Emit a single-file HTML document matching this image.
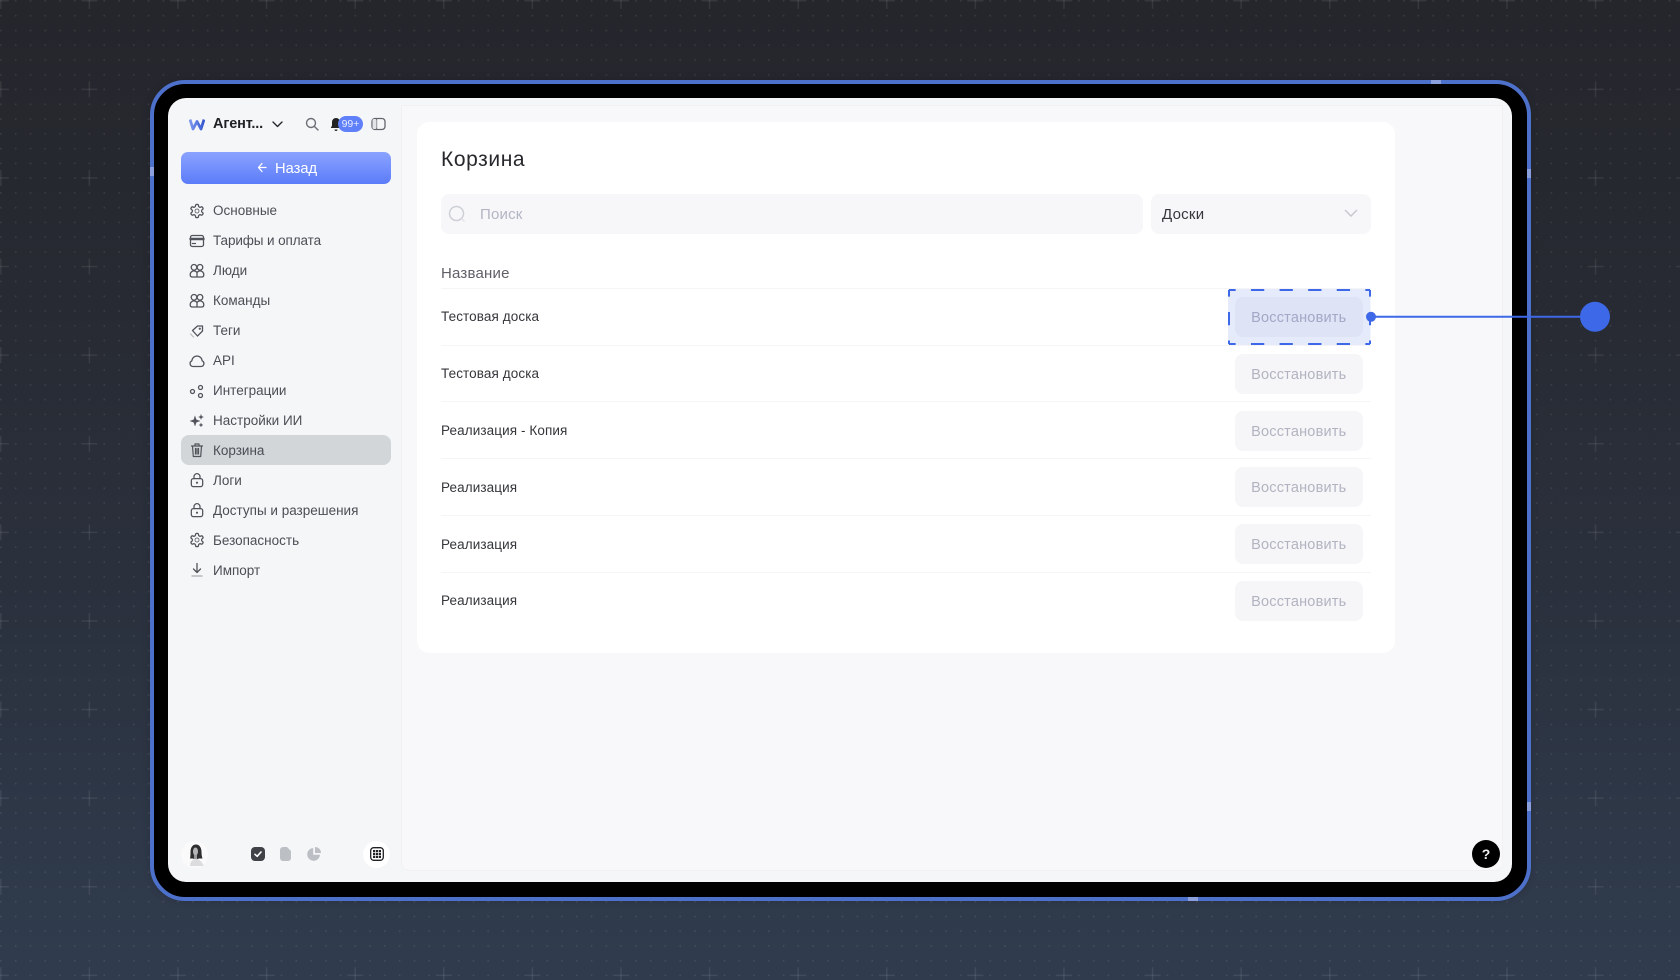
<!DOCTYPE html>
<html lang="ru"><head><meta charset="utf-8"><title>Корзина</title>
<style>
*{box-sizing:border-box}
html,body{margin:0;padding:0;width:1680px;height:980px;overflow:hidden}
body{position:relative;background:linear-gradient(180deg,#25262c 0%,#272a32 30%,#2b323f 65%,#303c4e 100%);font-family:"Liberation Sans",sans-serif;-webkit-font-smoothing:antialiased}
.a{position:absolute}
.t{position:absolute;white-space:nowrap;line-height:20px;height:20px}
.side{font-size:13.5px;color:#4c4e55;left:213px;letter-spacing:0}
.ic{position:absolute;left:189px;width:16px;height:16px;color:#50535a;fill:none;stroke:currentColor;stroke-width:1.9;stroke-linecap:round;stroke-linejoin:round}
.row{font-size:13.5px;color:#34363b;left:441px;letter-spacing:.1px}
.btn{position:absolute;left:1235px;width:127.5px;height:40px;border-radius:8px;background:#f6f6f9;color:#b1b3c0;font-size:14.5px;line-height:43.5px;text-align:center;letter-spacing:.2px;overflow:hidden}
.ln{position:absolute;left:441px;width:930px;height:1px;background:#f5f5f7}
</style></head><body>
<svg class="a" style="left:0;top:0" width="1680" height="980">
<defs>
<pattern id="p" x="0" y="0" width="88.6" height="88.6" patternUnits="userSpaceOnUse">
<g fill="#fff" fill-opacity=".09">
<rect x="14.9" y="14.9" width="1.6" height="1.6"/><rect x="29.7" y="14.9" width="1.6" height="1.6"/><rect x="44.4" y="14.9" width="1.6" height="1.6"/><rect x="59.2" y="14.9" width="1.6" height="1.6"/><rect x="74" y="14.9" width="1.6" height="1.6"/><rect x="0" y="14.9" width="1.6" height="1.6"/>
<rect x="14.9" y="29.7" width="1.6" height="1.6"/><rect x="29.7" y="29.7" width="1.6" height="1.6"/><rect x="44.4" y="29.7" width="1.6" height="1.6"/><rect x="59.2" y="29.7" width="1.6" height="1.6"/><rect x="74" y="29.7" width="1.6" height="1.6"/><rect x="0" y="29.7" width="1.6" height="1.6"/>
<rect x="14.9" y="44.4" width="1.6" height="1.6"/><rect x="29.7" y="44.4" width="1.6" height="1.6"/><rect x="44.4" y="44.4" width="1.6" height="1.6"/><rect x="59.2" y="44.4" width="1.6" height="1.6"/><rect x="74" y="44.4" width="1.6" height="1.6"/><rect x="0" y="44.4" width="1.6" height="1.6"/>
<rect x="14.9" y="59.2" width="1.6" height="1.6"/><rect x="29.7" y="59.2" width="1.6" height="1.6"/><rect x="44.4" y="59.2" width="1.6" height="1.6"/><rect x="59.2" y="59.2" width="1.6" height="1.6"/><rect x="74" y="59.2" width="1.6" height="1.6"/><rect x="0" y="59.2" width="1.6" height="1.6"/>
<rect x="14.9" y="74" width="1.6" height="1.6"/><rect x="29.7" y="74" width="1.6" height="1.6"/><rect x="44.4" y="74" width="1.6" height="1.6"/><rect x="59.2" y="74" width="1.6" height="1.6"/><rect x="74" y="74" width="1.6" height="1.6"/><rect x="0" y="74" width="1.6" height="1.6"/>
<rect x="14.9" y="0" width="1.6" height="1.6"/><rect x="29.7" y="0" width="1.6" height="1.6"/><rect x="44.4" y="0" width="1.6" height="1.6"/><rect x="59.2" y="0" width="1.6" height="1.6"/><rect x="74" y="0" width="1.6" height="1.6"/>
</g>
<g fill="#fff" fill-opacity=".08"><rect x="-7.2" y="0" width="16" height="1.5"/><rect x="81.4" y="0" width="16" height="1.5"/><rect x="0" y="-7.2" width="1.5" height="16"/><rect x="0" y="81.4" width="1.5" height="16"/></g>
</pattern>
<symbol id="gear" viewBox="0 0 24 24"><path d="M12.22 2h-.44a2 2 0 0 0-2 2v.18a2 2 0 0 1-1 1.73l-.43.25a2 2 0 0 1-2 0l-.15-.08a2 2 0 0 0-2.73.73l-.22.38a2 2 0 0 0 .73 2.73l.15.1a2 2 0 0 1 1 1.72v.51a2 2 0 0 1-1 1.74l-.15.09a2 2 0 0 0-.73 2.73l.22.38a2 2 0 0 0 2.73.73l.15-.08a2 2 0 0 1 2 0l.43.25a2 2 0 0 1 1 1.73V20a2 2 0 0 0 2 2h.44a2 2 0 0 0 2-2v-.18a2 2 0 0 1 1-1.73l.43-.25a2 2 0 0 1 2 0l.15.08a2 2 0 0 0 2.73-.73l.22-.39a2 2 0 0 0-.73-2.73l-.15-.08a2 2 0 0 1-1-1.74v-.5a2 2 0 0 1 1-1.74l.15-.09a2 2 0 0 0 .73-2.73l-.22-.38a2 2 0 0 0-2.73-.73l-.15.08a2 2 0 0 1-2 0l-.43-.25a2 2 0 0 1-1-1.73V4a2 2 0 0 0-2-2z"/><circle cx="12" cy="12" r="3" stroke-width="1.2"/></symbol>
<symbol id="users" viewBox="0 0 16 16"><circle cx="5" cy="4.300" r="2.800" stroke-width="1.300"/><circle cx="11" cy="4.300" r="2.800" stroke-width="1.300"/><path d="M8 9.500c-.8-1-1.800-1.600-3-1.600-2.200 0-3.800 1.700-3.800 3.800 0 1.500 1 2.300 2.300 2.300h9c1.300 0 2.300-.8 2.300-2.300 0-2.100-1.600-3.800-3.800-3.800-1.200 0-2.200.6-3 1.600zM8 9.500v4.500" stroke-width="1.300"/></symbol>
<symbol id="lock" viewBox="0 0 24 24"><rect x="3.500" y="10" width="17" height="12" rx="3"/><path d="M7.500 10V7a4.500 4.500 0 0 1 9 0v3"/><circle cx="12" cy="16" r=".7" fill="currentColor"/></symbol>
</defs>
<rect width="1680" height="980" fill="url(#p)"/>
</svg>

<!-- device frame -->
<div class="a" style="left:150px;top:80px;width:1380.500px;height:820.500px;border-radius:35px;background:#000;border:4.500px solid #4d70cb;box-shadow:0 0 8px rgba(0,0,0,.15)"></div>
<div class="a" style="left:1431px;top:80px;width:10px;height:4px;background:#8a9fdc"></div>
<div class="a" style="left:150px;top:167px;width:4px;height:9px;background:#8a9fdc"></div>
<div class="a" style="left:1526.500px;top:169px;width:4px;height:9px;background:#8a9fdc"></div>
<div class="a" style="left:1526.500px;top:802px;width:4px;height:9px;background:#8a9fdc"></div>
<div class="a" style="left:1188px;top:897px;width:10px;height:4px;background:#8a9fdc"></div>

<!-- screen -->
<div class="a" style="left:168px;top:98px;width:1344px;height:784px;border-radius:18px;background:#f5f6f8;overflow:hidden">
  <div class="a" style="left:233px;top:7px;width:1102px;height:766px;background:#f8f8fa;border:1px solid #f1f1f3;border-radius:0 0 8px 8px"></div>
</div>

<!-- card -->
<div class="a" style="left:417px;top:122px;width:978px;height:531px;border-radius:12px;background:#fff"></div>

<!-- sidebar header -->
<svg class="a" style="left:189px;top:118px" width="16" height="13" viewBox="0 0 16 13"><defs><linearGradient id="wg" x1="0" x2="1"><stop offset="0" stop-color="#7d97ee"/><stop offset="1" stop-color="#3558d0"/></linearGradient></defs><path d="M1 1.500l3 9.500 4-7.500 4 7.500 3-9.500" fill="none" stroke="url(#wg)" stroke-width="2.800" stroke-linejoin="round"/></svg>
<div class="t" style="left:213px;top:113.500px;font-size:14.500px;font-weight:700;color:#1f2024;letter-spacing:-.15px">Агент...</div>
<svg class="a" style="left:272px;top:120px" width="11" height="9" viewBox="0 0 11 9"><path d="M1 2l4.500 4.500L10 2" fill="none" stroke="#26272b" stroke-width="1.400" stroke-linecap="round" stroke-linejoin="round"/></svg>
<svg class="a" style="left:305px;top:117px" width="14" height="14" viewBox="0 0 14 14"><circle cx="6" cy="6" r="4.500" fill="none" stroke="#6c6f76" stroke-width="1.400"/><path d="M9.500 9.500L13 13" stroke="#6c6f76" stroke-width="1.400" stroke-linecap="round"/></svg>
<svg class="a" style="left:330px;top:117px" width="12" height="15" viewBox="0 0 12 15"><path d="M6 1a4 4 0 0 0-4 4v3.500L.8 11h10.400L10 8.500V5a4 4 0 0 0-4-4z" fill="#222"/><path d="M4.500 12.500a1.500 1.500 0 0 0 3 0z" fill="#222"/></svg>
<div class="a" style="left:338px;top:116px;width:25px;height:16px;border-radius:8px;background:#5f80f8;color:#e8edff;font-size:10.500px;line-height:17px;text-align:center;">99+</div>
<svg class="a" style="left:371px;top:117px" width="15" height="14" viewBox="0 0 15 14"><rect x="1" y="1.500" width="13" height="11" rx="3" fill="none" stroke="#62656c" stroke-width="1.300"/><path d="M5.500 1.500v11" stroke="#62656c" stroke-width="1.300"/><rect x="1.500" y="2" width="4" height="10" rx="1.500" fill="#e3e4e7"/></svg>

<!-- back button -->
<div class="a" style="left:181px;top:152px;width:209.500px;height:32px;border-radius:7px;background:linear-gradient(180deg,#8ba3ff 0%,#5b7cf9 100%)"></div>
<svg class="a" style="left:256.500px;top:162px" width="10" height="11" viewBox="0 0 10 11"><path d="M5 1.500L1.500 5.500 5 9.500M1.500 5.500H9" fill="none" stroke="#fff" stroke-width="1.300" stroke-linecap="round" stroke-linejoin="round"/></svg>
<div class="t" style="left:275px;top:158.500px;font-size:14.700px;color:#fff;letter-spacing:0">Назад</div>

<!-- selected -->
<div class="a" style="left:181px;top:435px;width:209.500px;height:30px;border-radius:8px;background:#d2d6d9"></div>

<!-- sidebar items -->
<svg class="ic" style="top:203px"><use href="#gear"/></svg>
<div class="t side" style="top:200.500px">Основные</div>
<svg class="ic" style="top:233px" viewBox="0 0 16 16"><rect x="1.500" y="2.500" width="13" height="11" rx="1.800" stroke-width="1.300"/><path d="M1.500 6h13" stroke-width="2.400"/><path d="M3.500 10.500h3" stroke-width="1.300"/></svg>
<div class="t side" style="top:230.500px;letter-spacing:-.1px">Тарифы и оплата</div>
<svg class="ic" style="top:263px"><use href="#users"/></svg>
<div class="t side" style="top:260.500px">Люди</div>
<svg class="ic" style="top:293px"><use href="#users"/></svg>
<div class="t side" style="top:290.500px">Команды</div>
<svg class="ic" style="top:323px" viewBox="0 0 16 16"><path d="M3.500 7.500L8.500 3h5v5l-5 5z" stroke-width="1.300"/><circle cx="10.800" cy="5.700" r=".8" fill="currentColor" stroke-width=".6"/><path d="M1.500 11l3 3" stroke="#b9bbc0" stroke-width="1.200"/></svg>
<div class="t side" style="top:320.500px">Теги</div>
<svg class="ic" style="top:353px" viewBox="0 0 16 16"><path d="M4 13.500a3 3 0 0 1-1.200-5.700A5.300 5.300 0 0 1 8 3a5.300 5.300 0 0 1 5.200 4.800A3 3 0 0 1 12 13.500z" stroke-width="1.300"/></svg>
<div class="t side" style="top:350.500px">API</div>
<svg class="ic" style="top:383px" viewBox="0 0 16 16" stroke-width="1.300"><circle cx="3.500" cy="8.500" r="2" stroke-width="1.300"/><circle cx="11.500" cy="4.500" r="2" stroke-width="1.300"/><circle cx="11.500" cy="12.500" r="2" stroke-width="1.300"/></svg>
<div class="t side" style="top:380.500px">Интеграции</div>
<svg class="ic" style="top:413px" viewBox="0 0 16 16"><path d="M6 3l1.300 3.700L11 8 7.300 9.300 6 13 4.700 9.300 1 8l3.700-1.300zM12 1.500l.7 1.800 1.800.7-1.800.7-.7 1.800-.7-1.800L9.500 4l1.800-.7zM12 10l.6 1.400 1.400.6-1.400.6-.6 1.400-.6-1.400-1.400-.6 1.400-.6z" fill="currentColor" stroke-width=".3"/></svg>
<div class="t side" style="top:410.500px">Настройки ИИ</div>
<svg class="ic" style="top:442px" viewBox="0 0 16 16"><path d="M2.500 4h11M6 4V2h4v2M3.500 4l.8 10.500h7.400L12.500 4M6.500 6.500v5.500M9.500 6.500v5.500M8 6.500v5.500" stroke-width="1.200"/></svg>
<div class="t side" style="top:441px">Корзина</div>
<svg class="ic" style="top:472px"><use href="#lock"/></svg>
<div class="t side" style="top:471px">Логи</div>
<svg class="ic" style="top:502px"><use href="#lock"/></svg>
<div class="t side" style="top:501px">Доступы и разрешения</div>
<svg class="ic" style="top:532px"><use href="#gear"/></svg>
<div class="t side" style="top:531px">Безопасность</div>
<svg class="ic" style="top:562px" viewBox="0 0 16 16"><path d="M8 1.500v8.500M4.500 7L8 10.500 11.500 7" stroke-width="1.300"/><path d="M3 14h10" stroke="#a9abb1" stroke-width="1.300"/></svg>
<div class="t side" style="top:561px">Импорт</div>

<!-- sidebar footer -->
<div class="a" style="left:181px;top:841px;width:27px;height:27px;border-radius:50%;background:#fafafb"></div>
<svg class="a" style="left:186px;top:841px" width="20" height="27" viewBox="0 0 20 27"><path d="M4.500 11c0-4.500 2.200-7.500 5.500-7.500s5.500 3 5.500 7.500c0 3 .5 5 1 6.500H13l-3 1-3.500-1H4c.4-1.500.5-3.500.5-6.500z" fill="#2e2e30"/><ellipse cx="9.500" cy="10.500" rx="2.500" ry="4" fill="#b5b5b7"/><path d="M8 14h3v4H8z" fill="#9a9a9c"/><path d="M4 25c.3-4 2-6 5-7h2c3 1 5.500 3 6.500 7z" fill="#dcdcde"/></svg>
<svg class="a" style="left:251px;top:847px" width="14" height="14" viewBox="0 0 14 14"><rect width="14" height="14" rx="4" fill="#414247"/><path d="M4 7.300l2.200 2L10 5" fill="none" stroke="#fff" stroke-width="1.600" stroke-linecap="round" stroke-linejoin="round"/></svg>
<svg class="a" style="left:280px;top:847px" width="11" height="14" viewBox="0 0 11 14"><path d="M3 0h4l4 4v7a3 3 0 0 1-3 3H3a3 3 0 0 1-3-3V3a3 3 0 0 1 3-3z" fill="#bcc0c5"/></svg>
<svg class="a" style="left:307px;top:847px" width="14" height="14" viewBox="0 0 14 14"><path d="M6.200 1A6.400 6.400 0 1 0 13 7.800H6.200z" fill="#bcc0c5"/><path d="M8 0a6 6 0 0 1 6 6H8z" fill="#bcc0c5"/></svg>
<div class="a" style="left:363px;top:841px;width:27px;height:27px;border-radius:50%;background:#fff"></div>
<svg class="a" style="left:369.500px;top:847px" width="14" height="14" viewBox="0 0 14 14"><rect x=".7" y=".7" width="12.600" height="12.600" rx="3" fill="none" stroke="#1f2023" stroke-width="1.300"/><g fill="#1f2023"><rect x="3" y="3" width="2.200" height="2.200"/><rect x="5.900" y="3" width="2.200" height="2.200"/><rect x="8.800" y="3" width="2.200" height="2.200"/><rect x="3" y="5.900" width="2.200" height="2.200"/><rect x="5.900" y="5.900" width="2.200" height="2.200"/><rect x="8.800" y="5.900" width="2.200" height="2.200"/><rect x="3" y="8.800" width="2.200" height="2.200"/><rect x="5.900" y="8.800" width="2.200" height="2.200"/><rect x="8.800" y="8.800" width="2.200" height="2.200"/></g></svg>

<!-- main -->
<div class="t" style="left:441px;top:147.500px;height:24px;line-height:24px;font-size:21px;color:#27282c;letter-spacing:.6px">Корзина</div>

<div class="a" style="left:441px;top:194px;width:702px;height:40px;border-radius:8px;background:#f7f7f9"></div>
<svg class="a" style="left:448px;top:205px" width="18" height="18" viewBox="0 0 18 18"><circle cx="8.500" cy="8.500" r="7" fill="none" stroke="#ced0d8" stroke-width="1.500"/><path d="M13.700 13.700L16.500 16.500" stroke="#e2e3e8" stroke-width="1.300"/></svg>
<div class="t" style="left:480px;top:205px;font-size:15px;color:#b2b5c3;letter-spacing:.2px">Поиск</div>

<div class="a" style="left:1151px;top:194px;width:219.500px;height:40px;border-radius:8px;background:#f7f7f9"></div>
<div class="t" style="left:1162px;top:205px;font-size:15px;color:#36373c;letter-spacing:.25px">Доски</div>
<svg class="a" style="left:1344px;top:208px" width="14" height="10" viewBox="0 0 14 10"><path d="M1 2l6 6 6-6" fill="none" stroke="#c6c7cd" stroke-width="1.400"/></svg>

<div class="t" style="left:441px;top:263.500px;font-size:15px;color:#5f6068;letter-spacing:.2px">Название</div>
<div class="ln" style="top:288px"></div>

<div class="t row" style="top:307px">Тестовая доска</div>
<div class="ln" style="top:345px"></div>
<div class="t row" style="top:364px">Тестовая доска</div>
<div class="ln" style="top:401px"></div>
<div class="t row" style="top:421px">Реализация - Копия</div>
<div class="ln" style="top:458px"></div>
<div class="t row" style="top:478px">Реализация</div>
<div class="ln" style="top:515px"></div>
<div class="t row" style="top:534.500px">Реализация</div>
<div class="ln" style="top:572px"></div>
<div class="t row" style="top:591px">Реализация</div>

<div class="btn" style="top:297px">Восстановить</div>
<div class="btn" style="top:353.800px">Восстановить</div>
<div class="btn" style="top:410.600px">Восстановить</div>
<div class="btn" style="top:467.400px">Восстановить</div>
<div class="btn" style="top:524.200px">Восстановить</div>
<div class="btn" style="top:581px">Восстановить</div>

<!-- help -->
<div class="a" style="left:1472px;top:840px;width:28px;height:28px;border-radius:50%;background:#000;color:#f2f2f2;font-size:14px;font-weight:700;line-height:28px;text-align:center">?</div>

<!-- annotation -->
<svg class="a" style="left:0;top:0" width="1680" height="980">
<rect x="1228" y="289" width="142.500" height="56" fill="#3d68e8" fill-opacity=".13"/>
<g fill="none" stroke="#3d68e8" stroke-width="2" stroke-dasharray="13.300 15.300" stroke-dashoffset="6.650">
<path d="M1229 290H1370"/><path d="M1229 344H1370"/><path d="M1229 290V344"/><path d="M1370 290V344"/>
</g>
<path d="M1371 316.800H1590" stroke="#3d68e8" stroke-width="2"/>
<circle cx="1371" cy="316.800" r="5" fill="#3d68e8"/>
<circle cx="1595" cy="316.800" r="15" fill="#3d68e8"/>
</svg>
</body></html>
